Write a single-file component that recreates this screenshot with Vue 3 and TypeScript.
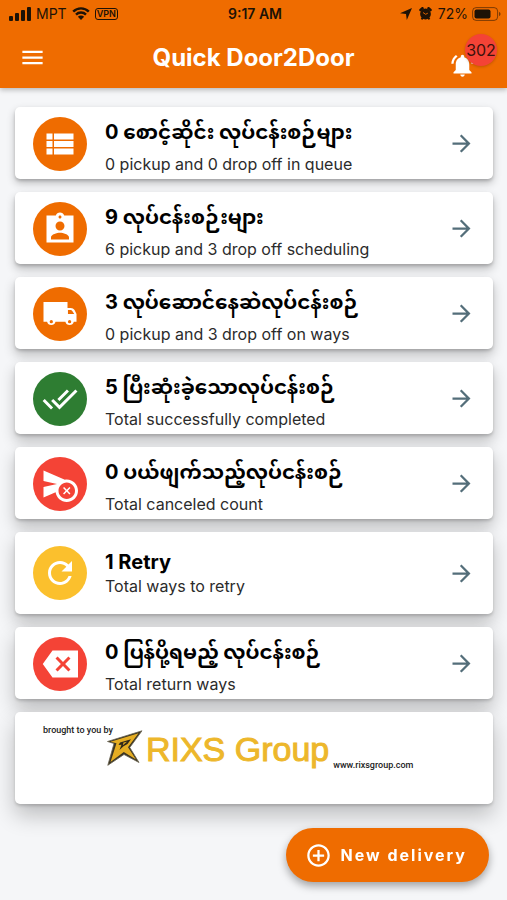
<script setup lang="ts">
interface Task {
  count: number
  title: string
  detail: string
  icon: string
  tone: 'orange' | 'green' | 'red' | 'yellow'
  depth: number
  latin?: boolean
}

const icons: Record<string, string> = {
  list: 'M3 14h4v-4H3v4zm0 5h4v-4H3v4zM3 9h4V5H3v4zm5 5h13v-4H8v4zm0 5h13v-4H8v4zM8 5v4h13V5H8z',
  badge: 'M21 3h-6.18C14.4 1.84 13.3 1 12 1s-2.4.84-2.82 2H3v18h18V3zm-9 0c.55 0 1 .45 1 1s-.45 1-1 1-1-.45-1-1 .45-1 1-1zm0 4c1.66 0 3 1.34 3 3s-1.34 3-3 3-3-1.34-3-3 1.34-3 3-3zm6 12H6v-1.4c0-2 4-3.1 6-3.1s6 1.1 6 3.1V19z',
  truck: 'M1 4h16v4h2.2c1 0 1.9.5 2.5 1.4L23 12v5.2h-1.8a2.9 2.9 0 0 1-5.6 0H9a2.9 2.9 0 0 1-5.6 0H1V4zm16.3 5.3V12h4.2l-1.2-1.9c-.4-.5-.8-.8-1.4-.8h-1.6zM6.2 16a1.1 1.1 0 1 0 0 2.2 1.1 1.1 0 0 0 0-2.2zm12.2 0a1.1 1.1 0 1 0 0 2.2 1.1 1.1 0 0 0 0-2.2z',
  done: 'M18 7l-1.41-1.41-6.34 6.34 1.41 1.41L18 7zm4.24-1.41L11.66 16.17 7.48 12l-1.41 1.41L11.66 19l12-12-1.42-1.41zM.41 13.41L6 19l1.41-1.41L1.83 12 .41 13.41z',
  cancel: 'M16.5 9c-.42 0-.83.04-1.24.11L1.01 3 1 10l9 2-9 2 .01 7 8.07-3.46C9.59 21.19 12.71 24 16.5 24c4.14 0 7.5-3.36 7.5-7.5S20.64 9 16.5 9zm0 13c-3.03 0-5.5-2.47-5.5-5.5s2.47-5.5 5.5-5.5 5.5 2.47 5.5 5.5-2.47 5.5-5.5 5.5zM18.27 14.03l-1.77 1.76-1.77-1.76-.7.7 1.76 1.77-1.76 1.77.7.7 1.77-1.76 1.77 1.76.7-.7-1.76-1.77 1.76-1.77-.7-.7z',
  retry: 'M17.65 6.35C16.2 4.9 14.21 4 12 4c-4.42 0-7.99 3.58-7.99 8s3.57 8 7.99 8c3.73 0 6.84-2.55 7.73-6h-2.08c-.82 2.33-3.04 4-5.65 4-3.31 0-6-2.69-6-6s2.69-6 6-6c1.66 0 3.14.69 4.22 1.78L13 11h7V4l-2.35 2.35z',
  back: 'M24 3H7L.5 12 7 21h17V3zm-5 12.59L17.59 17 14 13.41 10.41 17 9 15.59 12.59 12 9 8.41 10.41 7 14 10.59 17.59 7 19 8.41 15.41 12 19 15.59z',
}

const tasks: Task[] = [
  { count: 0, title: 'စောင့်ဆိုင်း လုပ်ငန်းစဉ်များ', detail: '0 pickup and 0 drop off in queue', icon: 'list', tone: 'orange', depth: 4 },
  { count: 9, title: 'လုပ်ငန်းစဉ်းများ', detail: '6 pickup and 3 drop off scheduling', icon: 'badge', tone: 'orange', depth: 5 },
  { count: 3, title: 'လုပ်ဆောင်နေဆဲလုပ်ငန်းစဉ်', detail: '0 pickup and 3 drop off on ways', icon: 'truck', tone: 'orange', depth: 6 },
  { count: 5, title: 'ပြီးဆုံးခဲ့သောလုပ်ငန်းစဉ်', detail: 'Total successfully completed', icon: 'done', tone: 'green', depth: 7 },
  { count: 0, title: 'ပယ်ဖျက်သည့်လုပ်ငန်းစဉ်', detail: 'Total canceled count', icon: 'cancel', tone: 'red', depth: 8 },
  { count: 1, title: 'Retry', detail: 'Total ways to retry', icon: 'retry', tone: 'yellow', depth: 9, latin: true },
  { count: 0, title: 'ပြန်ပို့ရမည့် လုပ်ငန်းစဉ်', detail: 'Total return ways', icon: 'back', tone: 'red', depth: 10 },
]
</script>

<template>
  <div class="screen">
    <header class="top">
      <div class="status">
        <div class="status-side">
          <svg class="signal" viewBox="0 0 22 14" aria-hidden="true">
            <rect x="0" y="9" width="4" height="5" rx="1" /><rect x="6" y="6" width="4" height="8" rx="1" />
            <rect x="12" y="3" width="4" height="11" rx="1" /><rect x="18" y="0" width="4" height="14" rx="1" />
          </svg>
          <span>MPT</span>
          <svg class="wifi" viewBox="0 0 18 13" aria-hidden="true">
            <path d="M1.2 4.6a11 11 0 0 1 15.6 0M4 7.6a7 7 0 0 1 10 0" fill="none" stroke="currentColor" stroke-width="2.4" />
            <path d="M9 13 5.9 9.8a4.4 4.4 0 0 1 6.2 0z" />
          </svg>
          <span class="vpn">VPN</span>
        </div>
        <span class="clock">9:17 AM</span>
        <div class="status-side right">
          <svg class="locate" viewBox="0 0 12 12" aria-hidden="true"><path d="M12 0 6.8 12 6 6 0 5.2z" /></svg>
          <svg class="alarm" viewBox="0 0 13 13" aria-hidden="true">
            <path d="M1.5 3 3.5 1.3M11.5 3 9.5 1.3" stroke="currentColor" stroke-width="2.6" stroke-linecap="round" />
            <circle cx="6.5" cy="7" r="5.4" /><path d="m2.5 12.4 1.5-2M10.5 12.4 9 10.4" stroke="currentColor" stroke-width="1.8" />
            <path d="M4 5.5 6.6 7.3 8.8 6.2" fill="none" stroke="#ef6c00" stroke-width=".9" />
          </svg>
          <span>72%</span>
          <svg class="battery" viewBox="0 0 29 14" aria-hidden="true">
            <rect x=".6" y=".6" width="25" height="12.8" rx="3.5" fill="none" stroke="currentColor" stroke-width="1" opacity=".55" />
            <rect x="2.5" y="2.5" width="16" height="9" rx="2" /><path d="M27 5v4c1-.3 1.5-1 1.5-2S28 5.3 27 5z" opacity=".55" />
          </svg>
        </div>
      </div>
      <div class="bar">
        <button class="icon-button" type="button" aria-label="Menu">
          <svg viewBox="0 0 24 24"><path d="M3 18h18v-2H3v2zm0-5h18v-2H3v2zm0-7v2h18V6H3z" /></svg>
        </button>
        <h1>Quick Door2Door</h1>
        <button class="icon-button bell" type="button" aria-label="Notifications">
          <svg viewBox="0 0 24 24"><path d="M7.58 4.08L6.15 2.65C3.75 4.48 2.17 7.3 2.03 10.5h2c.15-2.65 1.51-4.97 3.55-6.42zm12.39 6.42h2c-.15-3.2-1.73-6.02-4.12-7.85l-1.42 1.43c2.02 1.45 3.39 3.77 3.54 6.42zM18 11c0-3.07-1.64-5.64-4.5-6.32V4c0-.83-.67-1.5-1.5-1.5s-1.5.67-1.5 1.5v.68C7.63 5.36 6 7.92 6 11v5l-2 2v1h16v-1l-2-2v-5zm-6 11c1.1 0 2-.9 2-2h-4c0 1.1.9 2 2 2z" /></svg>
          <span class="count">302</span>
        </button>
      </div>
    </header>

    <main class="list">
      <a
        v-for="task in tasks"
        :key="task.icon"
        href="#"
        class="card task"
        :class="{ latin: task.latin }"
        :style="{ '--depth': task.depth }"
      >
        <span class="disc" :class="task.tone">
          <svg viewBox="0 0 24 24" aria-hidden="true"><path :d="icons[task.icon]" /></svg>
        </span>
        <span class="words">
          <strong>{{ task.count }} {{ task.title }}</strong>
          <span class="detail">{{ task.detail }}</span>
        </span>
        <svg class="arrow" viewBox="0 0 24 24" aria-hidden="true"><path d="M12 4l-1.41 1.41L16.17 11H4v2h12.17l-5.58 5.59L12 20l8-8z" /></svg>
      </a>

      <section class="card sponsor" :style="{ '--depth': 11 }">
        <span class="by">brought to you by</span>
        <svg class="mark" viewBox="0 0 36 36" aria-hidden="true">
          <path d="M.5 11.5 35 .8 22.8 17.5 32 32.5 17 24.5.8 35.3 7 13.5z" fill="#3a3423" stroke="#6b6550" stroke-width=".8" />
          <path d="M3.5 11.8 31.5 3.2 21 17.3 29 29.5 16.8 22 3.5 32 9.5 13.2z" fill="#e5ad22" />
          <path d="M13 12.5 24 9.3 20.5 14 16.5 16.2 12.5 20 14.5 14.8 11.5 15z" fill="#30291a" />
          <path d="M16.5 12.6 20 11.7 15.8 15.2z" fill="#e5ad22" />
        </svg>
        <span class="brand">RIXS Group</span>
        <a class="site" href="#">www.rixsgroup.com</a>
      </section>
    </main>

    <button class="new" type="button">
      <svg viewBox="0 0 24 24" aria-hidden="true"><path d="M13 7h-2v4H7v2h4v4h2v-4h4v-2h-4V7zm-1-5C6.48 2 2 6.48 2 12s4.48 10 10 10 10-4.48 10-10S17.52 2 12 2zm0 18c-4.41 0-8-3.59-8-8s3.59-8 8-8 8 3.59 8 8-3.59 8-8 8z" /></svg>
      <span>New delivery</span>
    </button>
  </div>
</template>

<style>
body {
  margin: 0;
  background: #f5f6f8;
}
</style>

<style scoped>
.screen {
  min-height: 100vh;
  font-family: Inter, "Noto Sans Myanmar", "Noto Sans", sans-serif;
  color: #000;
}
svg {
  display: block;
  flex: none;
  fill: currentColor;
}
button {
  border: 0;
  font: inherit;
  cursor: pointer;
}
.top {
  background: #ef6c00;
  box-shadow: 0 2px 5px rgba(0, 0, 0, 0.25);
}
.status {
  display: grid;
  grid-template-columns: 1fr auto 1fr;
  align-items: center;
  height: 27px;
  padding: 0 6px 0 9px;
  font-size: 14px;
  color: #1d1206;
}
.status-side {
  display: flex;
  align-items: center;
  gap: 5px;
}
.right {
  justify-content: flex-end;
  gap: 4px;
}
.signal {
  width: 22px;
  height: 14px;
}
.wifi {
  width: 18px;
  height: 13px;
}
.vpn {
  padding: 0 1px;
  border: 1px solid currentColor;
  border-radius: 3px;
  font-size: 9px;
  font-weight: 600;
  line-height: 10px;
}
.clock {
  font-weight: 600;
}
.locate {
  width: 12px;
  height: 12px;
}
.alarm {
  width: 13px;
  height: 13px;
  margin: 0 2px 0 3px;
}
.battery {
  width: 29px;
  height: 14px;
}
.bar {
  display: grid;
  grid-template-columns: 1fr auto 1fr;
  align-items: center;
  height: 61px;
  padding: 0 19px;
  color: #fff;
}
.bar h1 {
  margin: 0;
  font-size: 24px;
  font-weight: 700;
  line-height: 28px;
}
.icon-button {
  position: relative;
  justify-self: start;
  padding: 0;
  background: none;
  color: inherit;
}
.icon-button svg,
.arrow,
.new svg {
  width: 27px;
  height: 27px;
}
.bell {
  justify-self: end;
  margin-right: 12px;
  padding-top: 16px;
}
.count {
  position: absolute;
  top: -2px;
  left: 16px;
  width: 32px;
  height: 32px;
  border-radius: 50%;
  background: #f44336;
  box-shadow: 0 1px 3px rgba(0, 0, 0, 0.2);
  color: #3b120c;
  font-size: 16px;
  line-height: 32px;
  text-align: center;
}
.list {
  display: flex;
  flex-direction: column;
  gap: 13px;
  padding: 19px 14px 94px 15px;
}
.card {
  box-sizing: border-box;
  border-radius: 5px;
  background: #fff;
  box-shadow:
    0 2px 3px rgba(0, 0, 0, 0.16),
    0 calc(var(--depth) * 1px) calc(var(--depth) * 2px) rgba(0, 0, 0, 0.24);
}
.task {
  display: flex;
  align-items: center;
  padding: 4px 18px 3px;
  color: inherit;
  text-decoration: none;
}
.disc {
  display: grid;
  flex: none;
  place-items: center;
  width: 54px;
  height: 54px;
  margin-right: 18px;
  border-radius: 50%;
  color: #fff;
}
.disc svg {
  width: 36px;
  height: 36px;
}
.orange {
  background: #ef6c00;
}
.green {
  background: #2e7d32;
}
.red {
  background: #f44336;
}
.yellow {
  background: #fbc02d;
}
.words {
  flex: 1;
  min-width: 0;
  padding-top: 1px;
}
.words strong {
  display: block;
  font-size: 20px;
  font-weight: 700;
  line-height: 40px;
  white-space: nowrap;
}
.detail {
  display: block;
  color: #2b2b2b;
  font-size: 16px;
  line-height: 24px;
}
.latin {
  padding-top: 14px;
  padding-bottom: 14px;
}
.latin strong {
  line-height: 24px;
}
.arrow {
  color: #546e7a;
}
.sponsor {
  display: flex;
  align-items: flex-start;
  min-height: 92px;
  padding: 12px 28px;
}
.by,
.site {
  color: #222;
  font-family: Roboto, sans-serif;
  font-size: 9px;
  font-weight: 500;
  line-height: 12px;
  white-space: nowrap;
}
.mark {
  width: 36px;
  height: 36px;
  margin: 6px 3px 0 -6px;
}
.brand {
  margin-top: 5px;
  color: #edb72b;
  font-family: "Liberation Sans", Arial, sans-serif;
  font-size: 34px;
  line-height: 40px;
  white-space: nowrap;
  -webkit-text-stroke: 1px #edb72b;
}
.site {
  margin: 35px 0 0 4px;
  text-decoration: none;
}
.new {
  position: fixed;
  right: 18px;
  bottom: 18px;
  display: flex;
  align-items: center;
  gap: 9px;
  height: 54px;
  padding: 0 22px 0 19px;
  border-radius: 27px;
  background: #ef6c00;
  box-shadow: 0 4px 8px rgba(0, 0, 0, 0.35);
  color: #fff;
  font-size: 16px;
  font-weight: 700;
  letter-spacing: 2px;
}
</style>
